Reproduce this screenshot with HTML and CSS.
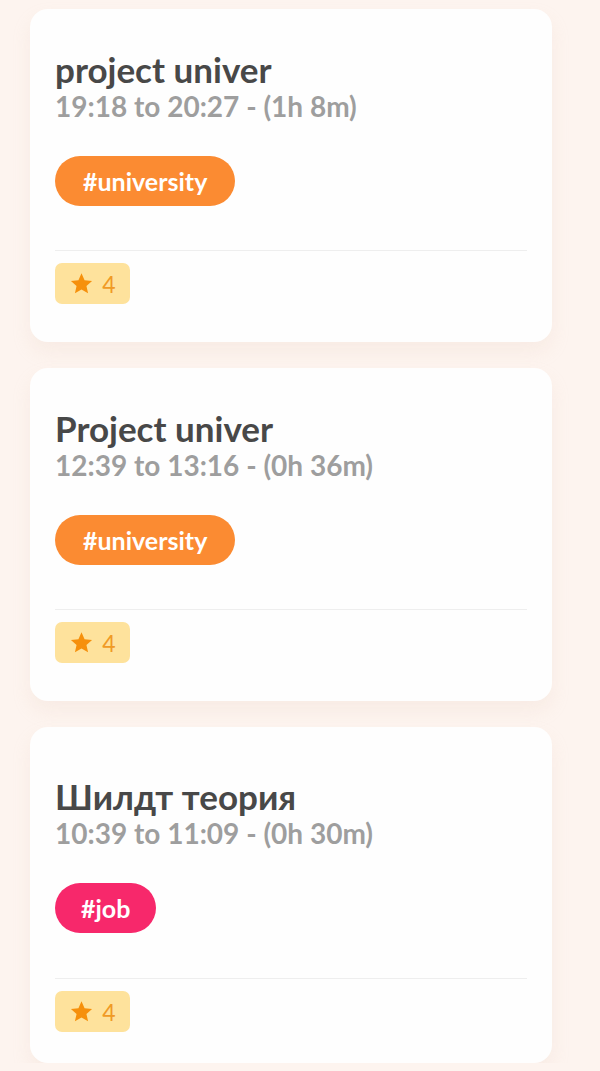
FILE: index.html
```html
<!DOCTYPE html>
<html>
<head>
<meta charset="utf-8">
<link rel="stylesheet" href="styles.css">
</head>
<body>
<div class="list">
  <div class="card">
    <div class="title">project univer</div>
    <div class="time">19:18 to 20:27 - (1h 8m)</div>
    <div class="tags"><span class="tag tag-orange">#university</span></div>
    <div class="divider"></div>
    <div class="rating"><svg class="star" viewBox="0 0 24 24"><path d="M12 2.2l2.95 6.6 7.2.72-5.4 4.84 1.56 7.08L12 17.8l-6.31 3.64 1.56-7.08-5.4-4.84 7.2-.72z"/></svg><span>4</span></div>
  </div>
  <div class="card">
    <div class="title">Project univer</div>
    <div class="time">12:39 to 13:16 - (0h 36m)</div>
    <div class="tags"><span class="tag tag-orange">#university</span></div>
    <div class="divider"></div>
    <div class="rating"><svg class="star" viewBox="0 0 24 24"><path d="M12 2.2l2.95 6.6 7.2.72-5.4 4.84 1.56 7.08L12 17.8l-6.31 3.64 1.56-7.08-5.4-4.84 7.2-.72z"/></svg><span>4</span></div>
  </div>
  <div class="card card-low">
    <div class="title">Шилдт теория</div>
    <div class="time">10:39 to 11:09 - (0h 30m)</div>
    <div class="tags"><span class="tag tag-pink">#job</span></div>
    <div class="divider"></div>
    <div class="rating"><svg class="star" viewBox="0 0 24 24"><path d="M12 2.2l2.95 6.6 7.2.72-5.4 4.84 1.56 7.08L12 17.8l-6.31 3.64 1.56-7.08-5.4-4.84 7.2-.72z"/></svg><span>4</span></div>
  </div>
</div>
</body>
</html>
```
FILE: styles.css
```css
html, body {
  margin: 0;
  padding: 0;
  background: #fdf4ef;
  font-family: Lato, "Noto Sans", sans-serif;
}
.list {
  display: flex;
  flex-direction: column;
  gap: 26px;
  padding: 9px 48px 0 30px;
}
.card {
  background: #fefefe;
  border-radius: 18px;
  padding: 41px 25px 38px 25px;
  box-shadow: 0 10px 18px rgba(230, 200, 185, 0.18);
}
.card-low {
  padding-top: 50px;
  padding-bottom: 31px;
}
.card-low .divider {
  margin-top: 45px;
}
.title {
  font-size: 35px;
  line-height: 38px;
  font-weight: 700;
  color: #484848;
}
.time {
  margin-top: 2px;
  font-size: 28px;
  line-height: 32px;
  font-weight: 700;
  color: #9e9e9e;
}
.tags {
  margin-top: 34px;
  display: flex;
}
.tag {
  height: 50px;
  line-height: 50px;
  border-radius: 25px;
  padding: 0 28px;
  font-size: 25px;
  font-weight: 700;
  color: #fff;
}
.tag-orange { background: #fb8b32; }
.tag-pink { background: #f7286b; padding: 0 26px; }
.divider {
  margin-top: 44px;
  height: 1px;
  background: #eeeeee;
}
.rating {
  margin-top: 12px;
  width: 75px;
  height: 41px;
  box-sizing: border-box;
  border-radius: 7px;
  background: #fee29c;
  display: flex;
  align-items: center;
  justify-content: center;
  gap: 8px;
  color: #f09a26;
  font-size: 23px;
  font-weight: 400;
}
.star {
  width: 25px;
  height: 25px;
  fill: #f6900c;
}
```
